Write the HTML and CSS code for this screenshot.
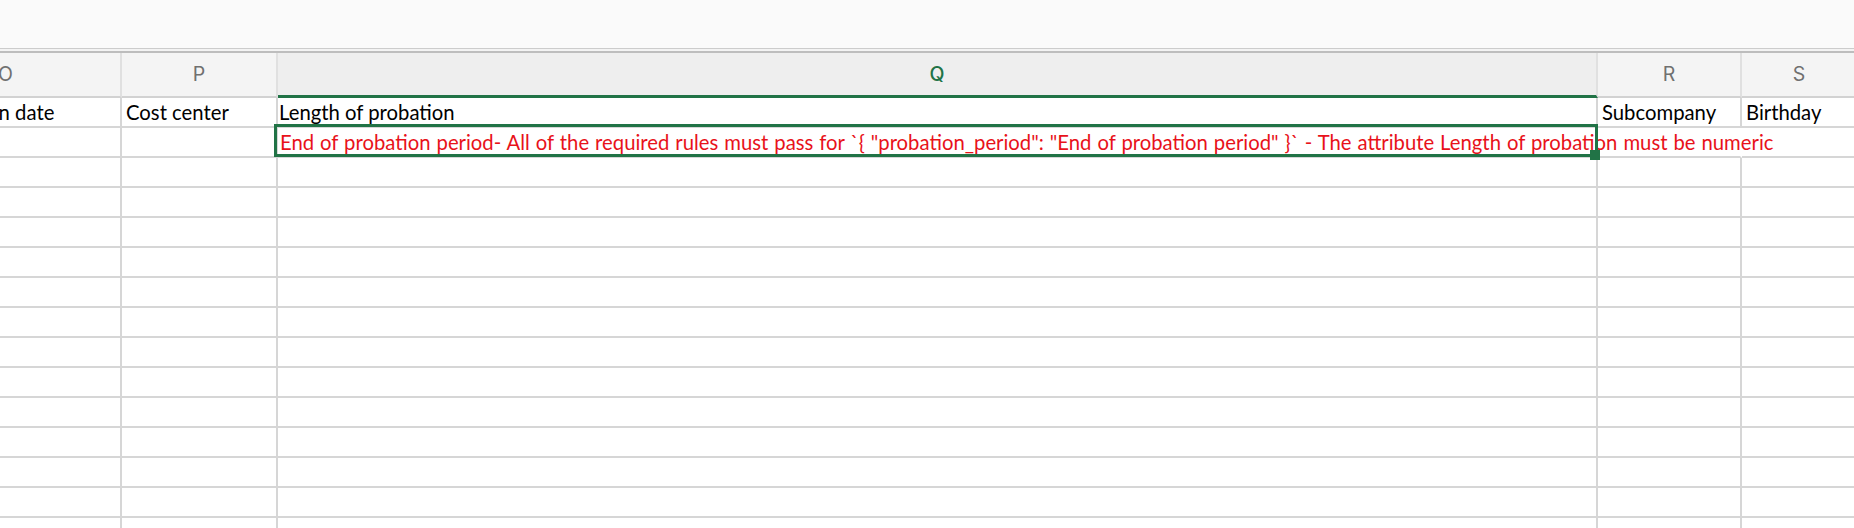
FILE: index.html
```html
<!DOCTYPE html>
<html lang="en">
<head>
<meta charset="utf-8">
<title>Import errors</title>
<link rel="stylesheet" href="styles.css">
</head>
<body>
<div class="app">
  <div class="toolbar"></div>
  <div class="rule"></div>
  <div class="viewport">
    <div class="sheet">
      <div class="col-head">O</div>
      <div class="col-head">P</div>
      <div class="col-head active">Q</div>
      <div class="col-head">R</div>
      <div class="col-head">S</div>

      <div class="cell first">Confirmation date</div>
      <div class="cell">Cost center</div>
      <div class="cell tight">Length of probation</div>
      <div class="cell">Subcompany</div>
      <div class="cell">Birthday</div>

      <div class="cell"></div>
      <div class="cell"></div>
      <div class="cell tight error selected">End of probation period- All of the required rules must pass for `{ "probation_period": "End of probation period" }`  - The attribute Length of probation must be numeric<span class="handle"></span></div>
      <div class="cell spill"></div>
      <div class="cell spill"></div>

      <div class="cell"></div><div class="cell"></div><div class="cell"></div><div class="cell"></div><div class="cell"></div>
      <div class="cell"></div><div class="cell"></div><div class="cell"></div><div class="cell"></div><div class="cell"></div>
      <div class="cell"></div><div class="cell"></div><div class="cell"></div><div class="cell"></div><div class="cell"></div>
      <div class="cell"></div><div class="cell"></div><div class="cell"></div><div class="cell"></div><div class="cell"></div>
      <div class="cell"></div><div class="cell"></div><div class="cell"></div><div class="cell"></div><div class="cell"></div>
      <div class="cell"></div><div class="cell"></div><div class="cell"></div><div class="cell"></div><div class="cell"></div>
      <div class="cell"></div><div class="cell"></div><div class="cell"></div><div class="cell"></div><div class="cell"></div>
      <div class="cell"></div><div class="cell"></div><div class="cell"></div><div class="cell"></div><div class="cell"></div>
      <div class="cell"></div><div class="cell"></div><div class="cell"></div><div class="cell"></div><div class="cell"></div>
      <div class="cell"></div><div class="cell"></div><div class="cell"></div><div class="cell"></div><div class="cell"></div>
      <div class="cell"></div><div class="cell"></div><div class="cell"></div><div class="cell"></div><div class="cell"></div>
      <div class="cell"></div><div class="cell"></div><div class="cell"></div><div class="cell"></div><div class="cell"></div>
      <div class="cell"></div><div class="cell"></div><div class="cell"></div><div class="cell"></div><div class="cell"></div>
    </div>
  </div>
</div>
</body>
</html>
```

FILE: styles.css
```css
html, body {
  margin: 0;
  padding: 0;
  background: #ffffff;
}

body {
  width: 1854px;
  height: 528px;
  overflow: hidden;
}

.app {
  display: flex;
  flex-direction: column;
  height: 528px;
}

/* ribbon strip above the grid */
.toolbar {
  height: 48px;
  background: #fafafa;
  border-bottom: 1px solid #cccccc;
}

.rule {
  height: 2px;
  background: #f3f3f3;
  border-bottom: 2px solid #bdbdbd;
}

.viewport {
  flex: 1;
  overflow: hidden;
}

/* sheet scrolled horizontally so that column O is partly hidden */
.sheet {
  display: grid;
  grid-template-columns: 231px 156px 1320px 144px 116px;
  grid-template-rows: 45px repeat(15, 30px);
  margin-left: -109px;
  width: max-content;
}

.col-head {
  display: flex;
  align-items: center;
  justify-content: center;
  background: #f4f4f4;
  border-right: 2px solid #e0e0e0;
  border-bottom: 2px solid #d2d2d2;
  font-family: Inter, "Liberation Sans", sans-serif;
  font-size: 19.5px;
  color: #707070;
  padding-bottom: 2px;
}

.col-head.active {
  background: #eeeeee;
  color: #217346;
  font-weight: 500;
  border-bottom: 3px solid #217346;
  padding-bottom: 1px;
}

.cell {
  position: relative;
  border-right: 2px solid #d6d6d6;
  border-bottom: 2px solid #d6d6d6;
  padding-left: 4px;
  font-family: Lato, "Liberation Sans", sans-serif;
  font-size: 20.3px;
  line-height: 28px;
  color: #000000;
  white-space: nowrap;
  overflow: hidden;
}

.cell.first {
  padding-left: 2px;
}

.cell.tight {
  padding-left: 1px;
}

.cell.spill {
  border-right-color: transparent;
}

.cell.error {
  color: #e8121a;
  overflow: visible;
  padding-left: 2px;
  word-spacing: 0.8px;
}

/* active cell frame */
.cell.selected::after {
  content: "";
  position: absolute;
  left: -4px;
  right: -2px;
  top: -4px;
  bottom: -1px;
  border: 3px solid #217346;
  pointer-events: none;
}

.handle {
  position: absolute;
  right: -4px;
  bottom: -4px;
  width: 10px;
  height: 10px;
  background: #217346;
  z-index: 1;
}
```
